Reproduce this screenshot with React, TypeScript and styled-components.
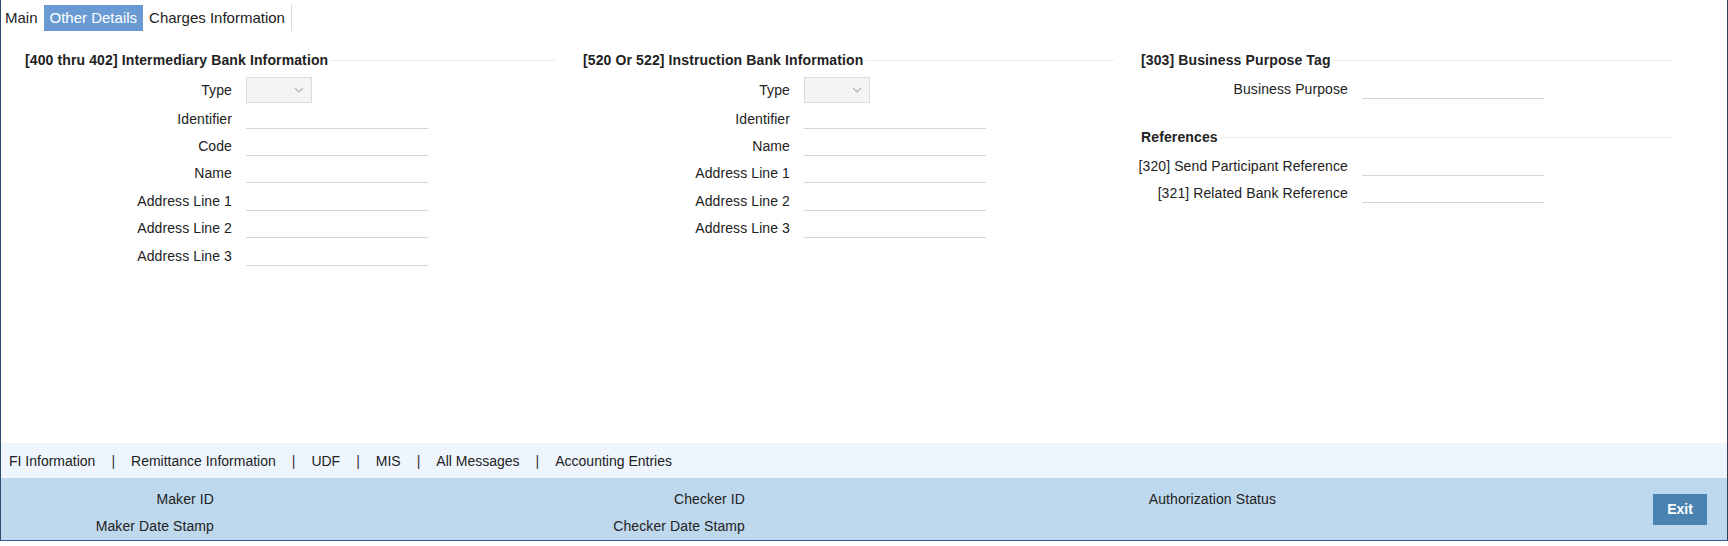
import React from "react";
import styled, { createGlobalStyle } from "styled-components";

const GlobalStyle = createGlobalStyle`
  html, body {
    margin: 0;
    padding: 0;
    background: #ffffff;
  }
  body {
    font-family: "Liberation Sans", Arial, sans-serif;
    font-size: 14px;
    letter-spacing: 0.1px;
    color: #222222;
  }
  * {
    box-sizing: border-box;
  }
`;

const Window = styled.div`
  width: 1728px;
  height: 541px;
  display: flex;
  flex-direction: column;
  border-left: 1px solid #2d4b70;
  border-right: 1px solid #33405a;
  border-bottom: 1px solid #2d5a9c;
  background: #ffffff;
`;

const TabBar = styled.div`
  display: flex;
  align-items: stretch;
  height: 31px;
  padding-top: 5px;
  margin-left: -2px;
`;

const Tab = styled.div<{ $active?: boolean }>`
  display: flex;
  align-items: center;
  padding: 0 6px 1px;
  font-size: 15px;
  letter-spacing: 0;
  color: ${({ $active }) => ($active ? "#ffffff" : "#222222")};
  background: ${({ $active }) => ($active ? "#6a9ad3" : "transparent")};
  cursor: pointer;
`;

const TabDivider = styled.div`
  width: 1px;
  background: #d8d8d8;
`;

const Content = styled.div`
  flex: 1;
  display: grid;
  grid-template-columns: repeat(3, 558px);
  align-content: start;
  padding: 14px 0 0 24px;
`;

const Column = styled.div`
  display: flex;
  flex-direction: column;
  padding-right: 27px;
`;

const Section = styled.div`
  display: flex;
  flex-direction: column;
  & + & {
    margin-top: 20px;
  }
`;

const SectionTitle = styled.div`
  display: flex;
  align-items: center;
  height: 30px;
  font-weight: 700;
  font-size: 14px;
  letter-spacing: 0.12px;
  color: #222222;
  white-space: nowrap;
  &::after {
    content: "";
    flex: 1;
    height: 1px;
    margin-left: 2px;
    background: #ececec;
  }
`;

const Row = styled.div<{ $tall?: boolean }>`
  display: flex;
  align-items: center;
  height: ${({ $tall }) => ($tall ? "30px" : "27.4px")};
`;

const Label = styled.label`
  width: 207px;
  flex-shrink: 0;
  display: flex;
  justify-content: flex-end;
  white-space: nowrap;
  color: #222222;
  margin-right: 14px;
`;

const TextInput = styled.input`
  width: 182px;
  height: 20px;
  border: none;
  border-bottom: 1px solid #d6d6d6;
  background: transparent;
  padding: 0 4px;
  font: inherit;
  outline: none;
`;

const SelectBox = styled.div`
  width: 66px;
  height: 26px;
  background: #f4f4f4;
  border: 1px solid #dcdcdc;
  display: flex;
  align-items: center;
  justify-content: flex-end;
  padding-right: 7px;
`;

const LinksBar = styled.div`
  height: 35px;
  display: flex;
  align-items: center;
  padding-left: 8px;
  letter-spacing: 0;
  background: #eef5fc;
`;

const LinkItem = styled.span`
  color: #222222;
  cursor: pointer;
`;

const LinkSep = styled.span`
  margin: 0 16px;
  color: #333333;
`;

const InfoBar = styled.div`
  height: 62px;
  display: flex;
  align-items: center;
  background: #bed8ed;
`;

const InfoGrid = styled.div`
  align-self: stretch;
  display: grid;
  grid-template-columns: repeat(3, 531px);
  padding-top: 7px;
`;

const InfoColumn = styled.div`
  display: flex;
  flex-direction: column;
`;

const InfoLabel = styled.div`
  width: 213px;
  height: 27px;
  display: flex;
  align-items: center;
  justify-content: flex-end;
  white-space: nowrap;
  color: #222222;
`;

const ExitButton = styled.button`
  margin-left: auto;
  margin-right: 20px;
  width: 54px;
  height: 31px;
  border: none;
  background: #4a82b0;
  color: #ffffff;
  font-family: "Liberation Sans", Arial, sans-serif;
  font-weight: 700;
  font-size: 14px;
  cursor: pointer;
`;

const Chevron = () => (
  <svg width="10" height="6" viewBox="0 0 10 6" fill="none">
    <path d="M1 1l4 4 4-4" stroke="#b4b4b4" strokeWidth="1.2" />
  </svg>
);

type Field = { label: string; select?: boolean };

const intermediary: Field[] = [
  { label: "Type", select: true },
  { label: "Identifier" },
  { label: "Code" },
  { label: "Name" },
  { label: "Address Line 1" },
  { label: "Address Line 2" },
  { label: "Address Line 3" },
];

const instruction: Field[] = [
  { label: "Type", select: true },
  { label: "Identifier" },
  { label: "Name" },
  { label: "Address Line 1" },
  { label: "Address Line 2" },
  { label: "Address Line 3" },
];

const FieldRows = ({ fields }: { fields: Field[] }) => (
  <>
    {fields.map((f) => (
      <Row key={f.label} $tall={f.select}>
        <Label>{f.label}</Label>
        {f.select ? (
          <SelectBox>
            <Chevron />
          </SelectBox>
        ) : (
          <TextInput type="text" />
        )}
      </Row>
    ))}
  </>
);

const links = [
  "FI Information",
  "Remittance Information",
  "UDF",
  "MIS",
  "All Messages",
  "Accounting Entries",
];

export default function App() {
  return (
    <>
      <GlobalStyle />
      <Window>
        <TabBar>
          <Tab>Main</Tab>
          <Tab $active>Other Details</Tab>
          <Tab>Charges Information</Tab>
          <TabDivider />
        </TabBar>

        <Content>
          <Column>
            <Section>
              <SectionTitle>[400 thru 402] Intermediary Bank Information</SectionTitle>
              <FieldRows fields={intermediary} />
            </Section>
          </Column>
          <Column>
            <Section>
              <SectionTitle>[520 Or 522] Instruction Bank Information</SectionTitle>
              <FieldRows fields={instruction} />
            </Section>
          </Column>
          <Column>
            <Section>
              <SectionTitle>[303] Business Purpose Tag</SectionTitle>
              <FieldRows fields={[{ label: "Business Purpose" }]} />
            </Section>
            <Section>
              <SectionTitle>References</SectionTitle>
              <FieldRows
                fields={[
                  { label: "[320] Send Participant Reference" },
                  { label: "[321] Related Bank Reference" },
                ]}
              />
            </Section>
          </Column>
        </Content>

        <LinksBar>
          {links.map((l, i) => (
            <React.Fragment key={l}>
              {i > 0 && <LinkSep>|</LinkSep>}
              <LinkItem>{l}</LinkItem>
            </React.Fragment>
          ))}
        </LinksBar>

        <InfoBar>
          <InfoGrid>
            <InfoColumn>
              <InfoLabel>Maker ID</InfoLabel>
              <InfoLabel>Maker Date Stamp</InfoLabel>
            </InfoColumn>
            <InfoColumn>
              <InfoLabel>Checker ID</InfoLabel>
              <InfoLabel>Checker Date Stamp</InfoLabel>
            </InfoColumn>
            <InfoColumn>
              <InfoLabel>Authorization Status</InfoLabel>
            </InfoColumn>
          </InfoGrid>
          <ExitButton>Exit</ExitButton>
        </InfoBar>
      </Window>
    </>
  );
}
